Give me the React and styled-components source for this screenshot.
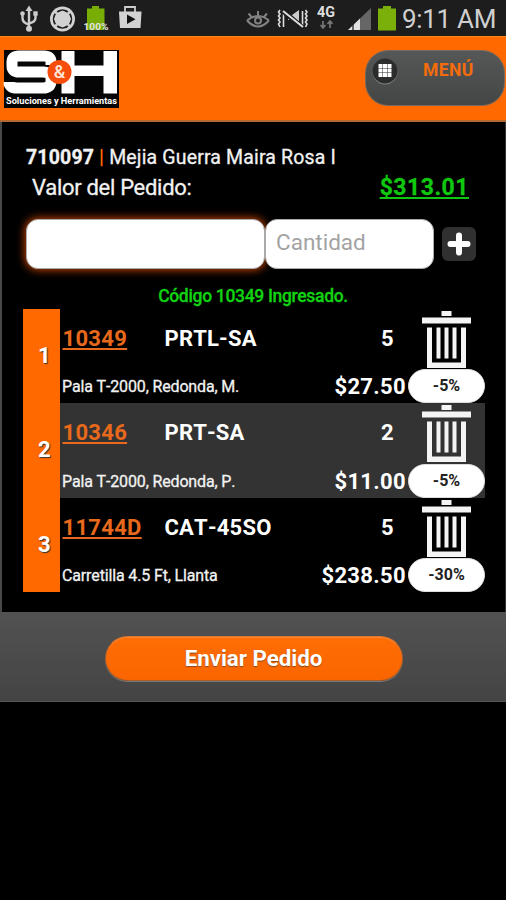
import React from 'react'
import styled, { createGlobalStyle } from 'styled-components'

const GlobalStyle = createGlobalStyle`
  body {
    margin: 0;
    background: #000;
    font-family: Roboto, 'Liberation Sans', sans-serif;
  }
  * {
    box-sizing: border-box;
  }
`

const Screen = styled.div`
  width: 506px;
  height: 900px;
  background: #000;
  color: #fff;
  overflow: hidden;
`

const StatusBar = styled.div`
  display: flex;
  justify-content: space-between;
  height: 36px;
  background: #1d1d1d;
`

const StatusIcons = styled.svg`
  display: block;
  height: 36px;
  width: ${props => props.$width}px;
`

const StatusRight = styled.div`
  display: flex;
  padding-right: 11px;
`

const Clock = styled.span`
  width: 93px;
  font-size: 26px;
  line-height: 38px;
  color: #cfcfcf;
  letter-spacing: -0.3px;
  white-space: nowrap;
`

const Header = styled.header`
  display: flex;
  justify-content: space-between;
  align-items: flex-start;
  height: 86px;
  padding: 13px 1px 0 4px;
  background: #ff6900;
  border-top: 1px solid #ff8a13;
  border-bottom: 2px solid #b36a35;
`

const Logo = styled.svg`
  display: block;
  width: 115px;
  height: 58px;
  overflow: visible;
`

const MenuButton = styled.button`
  display: flex;
  align-items: flex-start;
  width: 140px;
  height: 56px;
  padding: 7px 0 0 6px;
  border: 1px solid #77695f;
  border-radius: 23px;
  background: linear-gradient(#565858, #444646);
`

const MenuIcon = styled.svg`
  display: block;
  width: 26px;
  height: 27px;
`

const MenuLabel = styled.span`
  margin-left: 25px;
  font-family: Roboto, sans-serif;
  font-size: 17.5px;
  font-weight: 700;
  line-height: 25px;
  letter-spacing: 0.4px;
  color: #f56c0c;
`

const Panel = styled.main`
  height: 490px;
  padding: 24px 20px 0 21px;
  border-left: 2px solid #484848;
  border-right: 1px solid #333;
  background: #000;
`

const Customer = styled.div`
  height: 25px;
  padding-left: 3px;
  font-size: 19.5px;
  line-height: 24px;
  letter-spacing: 0.16px;
  white-space: pre;
  color: #f2f2f2;
  -webkit-text-stroke: 0.3px #f2f2f2;

  i {
    font-style: normal;
    font-weight: 700;
    color: #ff6900;
    -webkit-text-stroke: 0;
  }
`

const Total = styled.div`
  display: flex;
  justify-content: space-between;
  height: 48px;
  padding: 3px 16px 0 9px;
  font-size: 22px;
  line-height: 27px;
  letter-spacing: -0.3px;
  color: #f2f2f2;
  -webkit-text-stroke: 0.3px;
`

const Amount = styled.a`
  font-size: 23px;
  font-weight: 700;
  line-height: 28px;
  letter-spacing: 0.5px;
  color: #0fc80f;
  text-decoration: underline;
  text-decoration-thickness: 1.5px;
  text-underline-offset: 2px;
`

const Entry = styled.div`
  display: flex;
  align-items: center;
  height: 50px;
  padding-left: 3px;
`

const Field = styled.input`
  width: ${props => props.$width}px;
  height: 50px;
  margin: 0;
  padding: 0 10px 5px;
  border: 1px solid #aaa;
  border-radius: 12px;
  background: #fff;
  font-family: Roboto, sans-serif;
  font-size: 22.5px;
  outline: none;
  box-shadow: ${props => (props.$active ? '0 0 8px 1px #c74400' : 'none')};

  &::placeholder {
    color: #a3a3a3;
    opacity: 1;
  }
`

const AddButton = styled.button`
  display: flex;
  align-items: center;
  justify-content: center;
  width: 34px;
  height: 34px;
  margin-left: 8px;
  padding: 0;
  border: 0;
  border-radius: 6px;
  background: #303030;
`

const Message = styled.p`
  height: 40px;
  margin: 0;
  padding: 15px 2px 0 0;
  font-size: 17.5px;
  font-weight: 500;
  line-height: 24px;
  letter-spacing: -0.32px;
  text-align: center;
  color: #12d212;
  -webkit-text-stroke: 0.3px;
`

const List = styled.div`
  width: 462px;
  height: 283px;
  display: grid;
  grid-template-rows: repeat(3, 1fr);
  font-kerning: none;
`

const Row = styled.div`
  display: grid;
  grid-template-columns: 37px 348px 77px;
  background: ${props => (props.$shaded ? '#333' : '#000')};
`

const Position = styled.div`
  padding: 33px 0 0 15px;
  background: #ff6900;
  font-size: 22px;
  font-weight: 700;
  line-height: 27px;
  text-shadow: 1px 1px 1px #333;
`

const Details = styled.div`
  display: flex;
  flex-direction: column;
  justify-content: space-between;
  padding: 15px 2px 2px 3px;
`

const Line = styled.div`
  display: flex;
  align-items: center;
  height: 29px;
  font-size: 22px;
  font-weight: 700;
  white-space: nowrap;
`

const Code = styled.a`
  width: 102px;
  margin-left: -0.5px;
  color: #e8691b;
  letter-spacing: 0.3px;
  text-decoration: underline;
  text-decoration-thickness: 2px;
  text-underline-offset: 2px;
`

const Model = styled.span`
  flex: 1;
  letter-spacing: 0.2px;
`

const Quantity = styled.span`
  width: 25px;
`

const Description = styled.span`
  flex: 1;
  margin-left: -1px;
  font-size: 16px;
  font-weight: 400;
  letter-spacing: -0.15px;
  color: #f2f2f2;
  -webkit-text-stroke: 0.3px;
`

const Price = styled.span`
  letter-spacing: 0.35px;
`

const Actions = styled.div`
  display: flex;
  flex-direction: column;
  align-items: center;
  justify-content: space-between;
  padding-top: 2px;
`

const Discount = styled.div`
  width: 77px;
  height: 34px;
  border: 1px solid #ddd;
  border-radius: 17px;
  background: #fff;
  color: #222;
  font-size: 16px;
  font-weight: 700;
  line-height: 32px;
  text-align: center;
`

const Footer = styled.footer`
  display: flex;
  justify-content: center;
  align-items: flex-start;
  height: 90px;
  padding: 24px 0 0 1px;
  background: linear-gradient(#525252, #444);
  border-bottom: 1px solid #555;
`

const SendButton = styled.button`
  width: 298px;
  height: 45px;
  padding: 0 0 2px;
  border: 1px solid #a85d2b;
  border-top-color: #d87530;
  border-radius: 23px;
  background: linear-gradient(#ff6d05, #fa6500);
  box-shadow: inset 0 1px 0 #ff8630, 0 1px 0 #777;
  color: #fff;
  font-family: Roboto, sans-serif;
  font-size: 22.3px;
  font-weight: 700;
  text-shadow: 0 1px 1px #8a4a20;
`

const items = [
  { code: '10349', model: 'PRTL-SA', qty: 5, text: 'Pala T-2000, Redonda, M.', price: '$27.50', off: '-5%' },
  { code: '10346', model: 'PRT-SA', qty: 2, text: 'Pala T-2000, Redonda, P.', price: '$11.00', off: '-5%' },
  { code: '11744D', model: 'CAT-45SO', qty: 5, text: 'Carretilla 4.5 Ft, Llanta', price: '$238.50', off: '-30%' }
]

const Trash = () => (
  <svg width='49' height='57' viewBox='0 0 49 57' fill='#f4f4f4'>
    <path d='M19.5 0h10v5h-10zM0 6.500h49v6H0zM5 16.500h5v35h29v-35h5V57H5z' />
    <path d='M14.500 16.500h4v31h-4zM22.500 16.500h4v31h-4zM30.500 16.500h4v31h-4z' />
  </svg>
)

const Notifications = () => (
  <StatusIcons $width={150} viewBox='0 0 150 36'>
    {/* usb */}
    <g stroke='#ccc' strokeWidth='2.400' fill='none'>
      <path d='M29 10v18M22.500 14v4q0 5 6.500 6.500M35.500 14v4q0 4-6.500 5.500' />
    </g>
    <path d='M29 5.500l3.500 5.500h-7z' fill='#ccc' />
    <circle cx='29' cy='28.800' r='3' fill='#ccc' />
    <circle cx='22.500' cy='13.500' r='2.300' fill='#ccc' />
    <path d='M33.300 11.300h4.400v4.400h-4.400z' fill='#ccc' />
    {/* round badge */}
    <circle cx='62.500' cy='19' r='12.500' fill='#d2d2d2' />
    <circle cx='62.500' cy='19' r='8.800' fill='none' stroke='#1d1d1d' strokeWidth='2' />
    <path d='M62.500 10.500l6.500 3.500 2 5-2 5-6.500 3.500-6.500-3.500-2-5 2-5z' fill='#d2d2d2' />
    <path d='M54 10.500l3 3M71 10.500l-3 3M54 27.500l3-3M71 27.500l-3-3' stroke='#d2d2d2' strokeWidth='2.500' />
    {/* battery */}
    <path d='M87 8.500h5V6h7v2.500h5.500V30H87z' fill='#78ad05' />
    <text x='83.500' y='29.500' fill='#e4e4e4' fontSize='9.500' fontWeight='700' textLength='25' lengthAdjust='spacingAndGlyphs' fontFamily='Roboto'>
      100%
    </text>
    {/* store */}
    <path d='M125 12V7h10v5' stroke='#ccc' strokeWidth='1.800' fill='none' />
    <path d='M119 11.500h22.500l-1 16.500h-20.500z' fill='#d2d2d2' />
    <path d='M127 14.500l8.500 4.800-8.500 4.800z' fill='#111' />
  </StatusIcons>
)

const Signals = () => (
  <StatusIcons $width={159} viewBox='243 0 159 36'>
    {/* smart stay eye */}
    <g fill='none' stroke='#828282' strokeWidth='2'>
      <path d='M247 20.500q11-9 22 0M247 20.500q11 12 22 0M248.500 13.500l3.500 4M258 11v5M267 13.500l-3.500 4' />
      <circle cx='258' cy='20.500' r='3' />
    </g>
    {/* vibrate */}
    <g fill='none' stroke='#ddd' strokeWidth='1.600'>
      <path d='M280 10l-1.500 2 1.500 2-1.500 2 1.500 2-1.500 2 1.500 2-1.500 2 1.500 3M283.500 12v15M302.500 11v16M305.500 10l1.500 2-1.500 2 1.500 2-1.500 2 1.500 2-1.500 2 1.500 2-1.500 3' />
    </g>
    <path d='M288 15h4l7-5v16l-7-6h-4z' fill='#ccc' />
    <path d='M283 11l20 17' stroke='#1d1d1d' strokeWidth='5' />
    <path d='M283 11l20 16' stroke='#ddd' strokeWidth='2' />
    <text x='317' y='17' fill='#ddd' fontSize='14' fontWeight='700' textLength='18' lengthAdjust='spacingAndGlyphs' fontFamily='Roboto'>
      4G
    </text>
    <path d='M323 21v7M320.500 25l2.500 3 2.500-3M330 28v-7M327.500 24l2.500-3 2.500 3' fill='none' stroke='#777' strokeWidth='1.700' />
    {/* reception */}
    <path d='M371 8v22h-23z' fill='#666' />
    <path d='M348 30l4-3.800V30zM354 30v-5.700l4-3.800V30zM358 30V20.500l2-2v11.500z' fill='#e2e2e2' />
    <path d='M378 8.500h5V6h8v2.500h5v22h-18z' fill='#7bb00b' />
  </StatusIcons>
)

const App = () => (
  <>
    <GlobalStyle />
    <Screen>
      <StatusBar>
        <Notifications />
        <StatusRight>
          <Signals />
          <Clock>9:11 AM</Clock>
        </StatusRight>
      </StatusBar>

      <Header>
        <Logo viewBox='0 0 115 58'>
          <rect width='115' height='58' fill='#050505' />
          <g fill='none' stroke='#fff'>
            <path d='M47 15V12q0-6-7-6H15q-7 0-7 6v4q0 6 7 6h24q8 0 8 6v3q0 7-8 7H13q-8 0-8-6' strokeWidth='11' />
          </g>
          <path d='M57.500 1h13v14.500h29V1H113v42.500H99.500V26h-29v17.500h-13z' fill='#fff' />
          <circle cx='55.500' cy='22' r='12' fill='#f64d0c' />
          <text x='55.500' y='28' fill='#ffe9dc' fontSize='18' fontWeight='500' textAnchor='middle' fontFamily='Roboto'>&amp;</text>
          <text x='2' y='53.500' fill='#fff' fontSize='9.300' fontWeight='700' textLength='111' lengthAdjust='spacingAndGlyphs' fontFamily='Roboto'>
            Soluciones y Herramientas
          </text>
        </Logo>
        <MenuButton>
          <MenuIcon viewBox='0 0 26 27'>
            <circle cx='13' cy='14' r='12.500' fill='#858585' />
            <circle cx='13' cy='13' r='12.500' fill='#2c2c2c' />
            <path d='M6.500 6h4v4h-4zM11 6h4v4h-4zM15.500 6h4v4h-4zM6.500 10.500h4v4h-4zM11 10.500h4v4h-4zM15.500 10.500h4v4h-4zM6.500 15h4v4h-4zM11 15h4v4h-4zM15.500 15h4v4h-4z' fill='#fff' />
          </MenuIcon>
          <MenuLabel>MENÚ</MenuLabel>
        </MenuButton>
      </Header>

      <Panel>
        <Customer>
          <b>710097</b> <i>|</i> Mejia Guerra Maira Rosa I
        </Customer>
        <Total>
          <span>Valor del Pedido:</span>
          <Amount>$313.01</Amount>
        </Total>
        <Entry>
          <Field $width={239} $active />
          <Field $width={169} placeholder='Cantidad' />
          <AddButton>
            <svg width='24' height='24' viewBox='0 0 24 24'>
              <path d='M12 3.500v17M3.500 12h17' stroke='#fff' strokeWidth='6' strokeLinecap='round' />
            </svg>
          </AddButton>
        </Entry>
        <Message>Código 10349 Ingresado.</Message>
        <List>
          {items.map((item, i) => (
            <Row key={item.code} $shaded={i % 2 === 1}>
              <Position>{i + 1}</Position>
              <Details>
                <Line>
                  <Code>{item.code}</Code>
                  <Model>{item.model}</Model>
                  <Quantity>{item.qty}</Quantity>
                </Line>
                <Line>
                  <Description>{item.text}</Description>
                  <Price>{item.price}</Price>
                </Line>
              </Details>
              <Actions>
                <Trash />
                <Discount>{item.off}</Discount>
              </Actions>
            </Row>
          ))}
        </List>
      </Panel>

      <Footer>
        <SendButton>Enviar Pedido</SendButton>
      </Footer>
    </Screen>
  </>
)

export default App
